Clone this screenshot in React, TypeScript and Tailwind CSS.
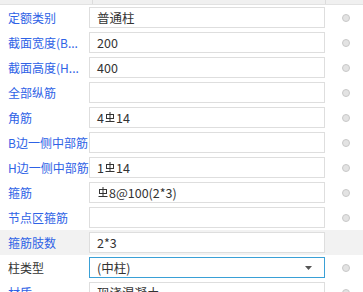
import React from 'react';

type Row = {
  label: string;
  value?: React.ReactNode;
  blue?: boolean;
  dot?: boolean;
  selected?: boolean;
  select?: boolean;
};

const Steel: React.FC = () => (
  <svg width="10" height="12" viewBox="0 0 10 12" className="inline-block align-[0px] mx-[1px]" fill="none" stroke="#333" strokeWidth="1">
    <rect x="1.5" y="3.5" width="7" height="4" />
    <line x1="5" y1="1" x2="5" y2="10.5" />
    <line x1="0.5" y1="10.5" x2="9.5" y2="10.5" />
  </svg>
);

const rows: Row[] = [
  { label: '定额类别', value: '普通柱', blue: true, dot: true },
  { label: '截面宽度(B...', value: '200', blue: true, dot: true },
  { label: '截面高度(H...', value: '400', blue: true, dot: true },
  { label: '全部纵筋', value: '', blue: true, dot: true },
  { label: '角筋', value: <>4<Steel />14</>, blue: true, dot: true },
  { label: 'B边一侧中部筋', value: '', blue: true, dot: true },
  { label: 'H边一侧中部筋', value: <>1<Steel />14</>, blue: true, dot: true },
  { label: '箍筋', value: <><Steel />8@100(2*3)</>, blue: true, dot: true },
  { label: '节点区箍筋', value: '', blue: true, dot: true },
  { label: '箍筋肢数', value: '2*3', blue: true, selected: true },
  { label: '柱类型', value: '(中柱)', select: true, dot: true },
  { label: '材质', value: '现浇混凝土', blue: true, dot: true },
];

export default function App() {
  return (
    <div
      className="w-[363px] h-[292px] overflow-hidden bg-white text-[12.5px] text-[#333]"
      style={{ fontFamily: '"Noto Sans CJK SC", "Noto Sans", sans-serif' }}
    >
      <div className="flex h-[5px] bg-[#f0f0f0] border-b border-[#e2e2e2]">
        <div className="w-[93px] border-r border-[#dcdcdc]" />
        <div className="w-[233px] border-r border-[#dcdcdc]" />
        <div className="flex-1" />
      </div>
      {rows.map((r, i) => (
        <div key={i} className={`flex items-center h-[25px] ${r.selected ? 'bg-[#f2f2f2]' : ''}`}>
          <div
            className={`w-[89px] pl-2 overflow-hidden whitespace-nowrap text-[12px] leading-[18px] ${
              r.blue ? 'text-[#2e62e6]' : 'text-[#333]'
            }`}
          >
            {r.label}
          </div>
          <div
            className={`w-[236px] h-[21px] flex items-center px-[7px] bg-white leading-[18px] border ${
              r.select ? 'border-[#3aa0d6]' : 'border-[#dedede]'
            }`}
          >
            <span className="flex-1 whitespace-nowrap">{r.value}</span>
            {r.select && (
              <svg width="7" height="4" viewBox="0 0 7 4" className="mr-[5px]">
                <path d="M0 0H7L3.5 4Z" fill="#555" />
              </svg>
            )}
          </div>
          <div className="flex-1 flex justify-center pl-[3px]">
            {r.dot && <div className="w-[8px] h-[8px] rounded-full bg-[#e3e3e3] border border-[#c9c9c9]" />}
          </div>
        </div>
      ))}
    </div>
  );
}
